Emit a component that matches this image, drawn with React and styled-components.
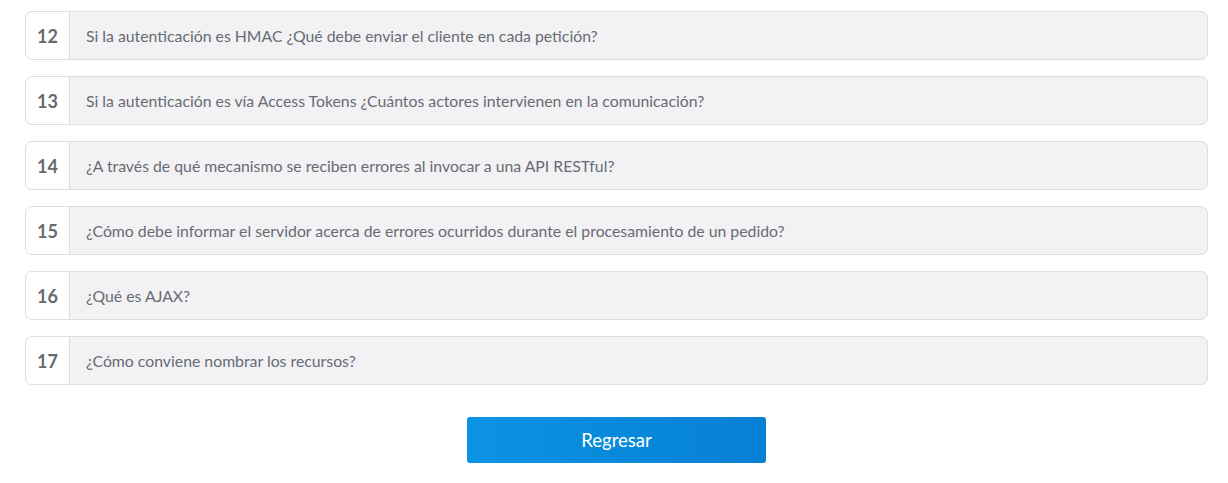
import React from 'react'
import styled, { createGlobalStyle } from 'styled-components'

const Global = createGlobalStyle`
  body {
    margin: 0;
    background: #fff;
    font-family: Lato, "Open Sans", sans-serif;
  }
`

const preguntas = [
  { n: 12, q: 'Si la autenticación es HMAC ¿Qué debe enviar el cliente en cada petición?' },
  { n: 13, q: 'Si la autenticación es vía Access Tokens ¿Cuántos actores intervienen en la comunicación?' },
  { n: 14, q: '¿A través de qué mecanismo se reciben errores al invocar a una API RESTful?' },
  { n: 15, q: '¿Cómo debe informar el servidor acerca de errores ocurridos durante el procesamiento de un pedido?' },
  { n: 16, q: '¿Qué es AJAX?' },
  { n: 17, q: '¿Cómo conviene nombrar los recursos?' },
]

export default function App() {
  return (
    <>
      <Global />
      <Page>
        <List>
          {preguntas.map(p => (
            <Row key={p.n}>
              <Num>{p.n}</Num>
              <Question>{p.q}</Question>
            </Row>
          ))}
        </List>
        <Actions>
          <Button>Regresar</Button>
        </Actions>
      </Page>
    </>
  )
}

const Page = styled.div`
  width: 1183px;
  padding: 11px 0 0 25px;
`

const List = styled.div`
  display: flex;
  flex-direction: column;
  gap: 16px;
`

const Row = styled.div`
  display: flex;
  height: 49px;
  box-sizing: border-box;
  border: 1px solid #dcdce1;
  border-radius: 7px;
  overflow: hidden;
  background: #f2f2f5;
`

const Num = styled.div`
  width: 43px;
  flex-shrink: 0;
  display: flex;
  align-items: center;
  justify-content: center;
  background: #fff;
  border-right: 1px solid #dcdce1;
  font-size: 18px;
  font-weight: 700;
  color: #676a70;
`

const Question = styled.div`
  flex: 1;
  display: flex;
  align-items: center;
  padding-left: 16px;
  font-size: 15.8px;
  color: #686b72;
`

const Actions = styled.div`
  display: flex;
  justify-content: center;
  padding-top: 32px;
`

const Button = styled.button`
  width: 299px;
  height: 46px;
  border: none;
  border-radius: 3px;
  background: linear-gradient(90deg, #0b93e3, #0680d2);
  color: #fff;
  font-family: Lato, sans-serif;
  font-size: 18.5px;
  cursor: pointer;
`
